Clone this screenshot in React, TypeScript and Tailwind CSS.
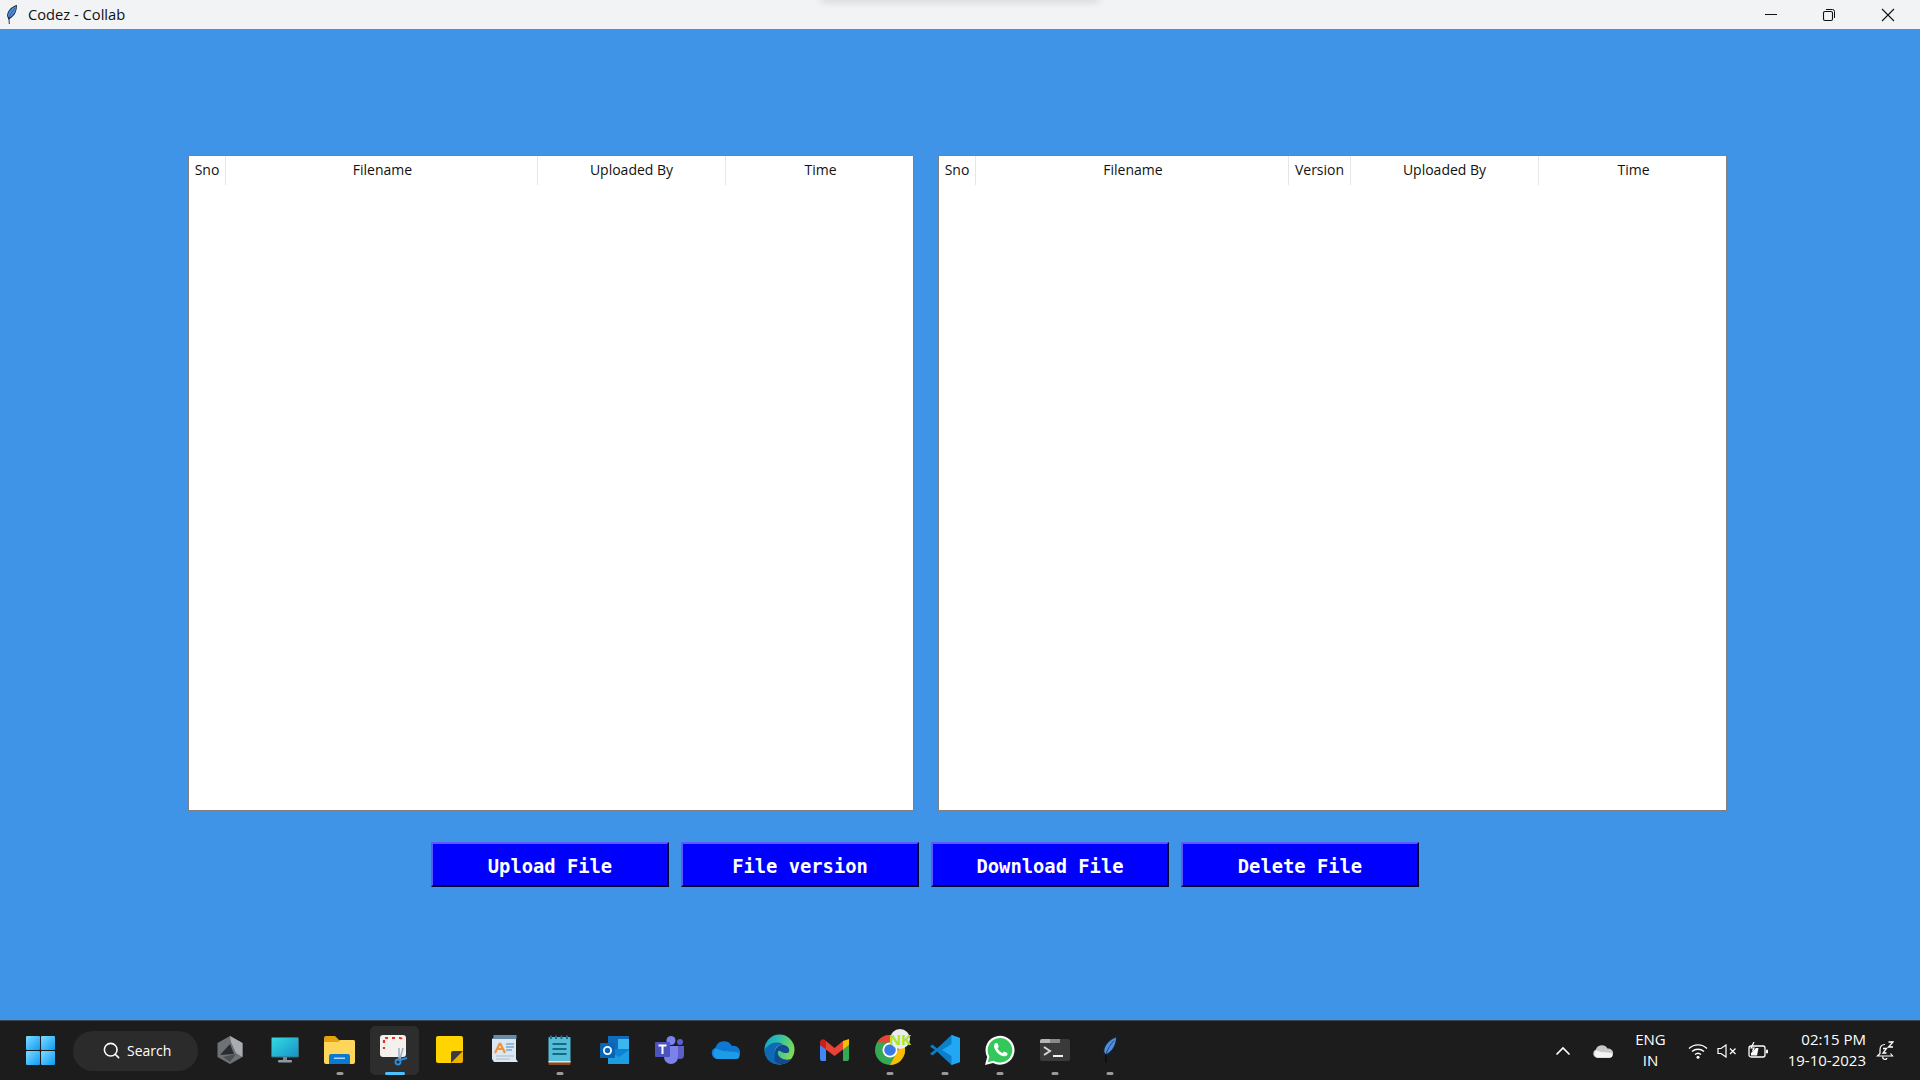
import { Search } from "lucide-react";
import type { ReactNode } from "react";

type Col = { label: string; width: string };

const leftCols: Col[] = [
  { label: "Sno", width: "w-[37px]" },
  { label: "Filename", width: "w-[312px] pl-[2px]" },
  { label: "Uploaded By", width: "w-[188px]" },
  { label: "Time", width: "flex-1 pl-[2px]" },
];

const rightCols: Col[] = [
  { label: "Sno", width: "w-[37px]" },
  { label: "Filename", width: "w-[313px] pl-[2px]" },
  { label: "Version", width: "w-[62px]" },
  { label: "Uploaded By", width: "w-[188px]" },
  { label: "Time", width: "flex-1 pl-[2px]" },
];

function FeatherIcon({ className }: { className: string }) {
  return (
    <svg viewBox="0 0 14 27" className={className}>
      <path d="M14 0C7 1.500 0 8 0 15.500L2 20.500C9.500 18 14.500 9 14 0Z" fill="#16233a" />
      <path d="M13 1.500C7.500 3.500 1.200 9 1.200 15.500L2.600 18.500C8.500 16 13 9 13 1.500Z" fill="#4f8fdc" />
      <path d="M11 4.500C8 8 5 12 2.800 18.500" stroke="#1a2c48" strokeWidth="0.700" fill="none" />
      <path d="M2.600 18L3.200 27" stroke="#0c0c0c" strokeWidth="1.200" />
    </svg>
  );
}

function TitleBar() {
  return (
    <div className="relative flex h-[29px] shrink-0 items-center bg-[#f1f3f5] font-['Open_Sans',sans-serif] text-[14.700px] text-[#111]">
      <div className="absolute left-[820px] top-[-6px] h-[6px] w-[280px] rounded-full shadow-[0_1px_8px_rgba(0,0,0,0.16)]" />
      <div className="ml-[7px] mr-[11px] flex">
        <FeatherIcon className="h-[19px] w-[10px]" />
      </div>
      <span>Codez - Collab</span>
      <div className="ml-auto flex items-center">
        <svg width="14" height="14" viewBox="0 0 14 14" className="mr-[44px]">
          <path d="M1 6.500H13" stroke="#111" strokeWidth="1" />
        </svg>
        <svg width="14" height="14" viewBox="0 0 14 14" className="mr-[45px]">
          <rect x="1.500" y="3.500" width="9" height="9" rx="1.500" fill="none" stroke="#111" strokeWidth="1.100" />
          <path d="M4 1.500H10.500A2 2 0 0 1 12.500 3.500V10" fill="none" stroke="#111" strokeWidth="1" />
        </svg>
        <svg width="14" height="14" viewBox="0 0 14 14" className="mr-[25px]">
          <path d="M1 1L13 13M13 1L1 13" stroke="#111" strokeWidth="1.100" />
        </svg>
      </div>
    </div>
  );
}

function FileTable({ cols, className }: { cols: Col[]; className: string }) {
  return (
    <div className={`h-[656px] shrink-0 border border-[#808080] bg-white ${className}`}>
      <div className="flex h-[29px] font-['Open_Sans',sans-serif] text-[14px] text-[#111]">
        {cols.map((c, i) => (
          <div
            key={c.label}
            className={`flex items-center justify-center pb-[2px] ${c.width} ${
              i < cols.length - 1 ? "border-r border-[#e6e6e6]" : ""
            }`}
          >
            {c.label}
          </div>
        ))}
      </div>
    </div>
  );
}

function ActionButton({ label }: { label: string }) {
  return (
    <button className="h-[45px] w-[238px] border-2 border-t-[#5a5aff] border-l-[#5a5aff] border-r-[#000033] border-b-[#000033] bg-[#0000ff] pt-[5px] font-['DejaVu_Sans_Mono',monospace] text-[18.800px] font-bold text-white">
      {label}
    </button>
  );
}

function Slot({ children, dot, active }: { children: ReactNode; dot?: boolean; active?: boolean }) {
  return (
    <div className="relative flex h-[60px] w-[55px] shrink-0 items-center justify-center">
      {active && (
        <div className="absolute inset-x-[3px] top-[5px] h-[49px] rounded-[5px] border border-[#2c2c2c] bg-[#2d2d2d]" />
      )}
      <div className="relative mb-[2px] flex">{children}</div>
      {dot && (
        <div
          className={`absolute bottom-[6px] left-1/2 h-[3px] -translate-x-1/2 rounded-full ${
            active ? "w-[20px] bg-[#4cc2ff]" : "w-[7px] bg-[#9a9a9a]"
          }`}
        />
      )}
    </div>
  );
}

function WindowsLogo() {
  return (
    <svg width="29" height="29" viewBox="0 0 29 29">
      <defs>
        <linearGradient id="win" x1="0" y1="0" x2="1" y2="1">
          <stop offset="0" stopColor="#7fdcff" />
          <stop offset="1" stopColor="#0c9bf5" />
        </linearGradient>
      </defs>
      <rect x="0" y="0" width="14" height="14" rx="1" fill="url(#win)" />
      <rect x="15" y="0" width="14" height="14" rx="1" fill="url(#win)" />
      <rect x="0" y="15" width="14" height="14" rx="1" fill="url(#win)" />
      <rect x="15" y="15" width="14" height="14" rx="1" fill="url(#win)" />
    </svg>
  );
}

function HexIcon() {
  return (
    <svg width="28" height="30" viewBox="0 0 28 30">
      <path d="M14 1L26.500 8V22L14 29L1.500 22V8Z" fill="#6d7278" />
      <path d="M14 1L26.500 8V22L20 18L15 7Z" fill="#a9adb2" />
      <path d="M4 20L14 9L18 19Z" fill="#2a2c2f" />
      <path d="M7 22L20 19L14 27Z" fill="#4c4f54" />
    </svg>
  );
}

function MonitorIcon() {
  return (
    <svg width="28" height="26" viewBox="0 0 28 26">
      <defs>
        <linearGradient id="mon" x1="0" y1="0" x2="1" y2="1">
          <stop offset="0" stopColor="#35dbe0" />
          <stop offset="1" stopColor="#1591c9" />
        </linearGradient>
      </defs>
      <rect x="0.500" y="0.500" width="27" height="19.500" rx="1" fill="url(#mon)" stroke="#3d6b7a" />
      <rect x="12" y="20" width="4" height="3" fill="#79858c" />
      <rect x="7" y="23" width="14" height="2.500" rx="1" fill="#8f9aa0" />
    </svg>
  );
}

function FolderIcon() {
  return (
    <svg width="31" height="28" viewBox="0 0 31 28">
      <path d="M0 2A2 2 0 0 1 2 0H11L15 4H29A2 2 0 0 1 31 6V10H0Z" fill="#e3a30f" />
      <path d="M0 6H14L17 4H29A2 2 0 0 1 31 6V26A2 2 0 0 1 29 28H2A2 2 0 0 1 0 26Z" fill="#ffd65c" />
      <path d="M5 20A2 2 0 0 1 7 18H24A2 2 0 0 1 26 20V28H5Z" fill="#0b78d4" />
      <rect x="10" y="21.500" width="11" height="1.500" fill="#a5d8ff" />
    </svg>
  );
}

function SnipIcon() {
  return (
    <svg width="32" height="32" viewBox="0 0 32 32">
      <rect x="1" y="1" width="26" height="22" rx="3" fill="#f4f0ee" />
      <path d="M5 9V6A2 2 0 0 1 7 4H9M13 4H16M20 4H21A2 2 0 0 1 23 6V7M5 13V15" stroke="#d9352c" strokeWidth="2.200" fill="none" strokeDasharray="3 2" />
      <path d="M20 14L20 25" stroke="#9db1c2" strokeWidth="1.600" />
      <path d="M24 14L21 25" stroke="#9db1c2" strokeWidth="1.600" />
      <circle cx="19" cy="28" r="2.500" fill="none" stroke="#2a8fe0" strokeWidth="1.800" />
      <path d="M21 26L28 24" stroke="#2a8fe0" strokeWidth="2" />
    </svg>
  );
}

function StickyIcon() {
  return (
    <svg width="27" height="27" viewBox="0 0 27 27">
      <path d="M2 0H25A2 2 0 0 1 27 2V15L15 27H2A2 2 0 0 1 0 25V2A2 2 0 0 1 2 0Z" fill="#ffd400" />
      <path d="M15 27V17A2 2 0 0 1 17 15H27Z" fill="#3b3b3b" />
      <path d="M15 27L27 15V25A2 2 0 0 1 25 27Z" fill="#eeb100" />
    </svg>
  );
}

function WordpadIcon() {
  return (
    <svg width="26" height="29" viewBox="0 0 26 29">
      <path d="M2 3H24V24L26 27H2L0 24V4Z" fill="#dbe8f4" />
      <rect x="1.500" y="0" width="23" height="4" fill="#6a8ba8" />
      <path d="M8 8L3 18M8 8L13 18M5 14H11" stroke="#f0933a" strokeWidth="2.200" fill="none" />
      <path d="M14 9H22M14 12H22M14 15H20" stroke="#7fa8d0" strokeWidth="1.400" />
      <path d="M4 21H22M4 24H18" stroke="#aeb9c4" strokeWidth="1" />
    </svg>
  );
}

function NotepadIcon() {
  return (
    <svg width="23" height="30" viewBox="0 0 23 30">
      <rect x="0.500" y="2" width="22" height="25" rx="1" fill="#55bdd9" />
      <path d="M0.500 26H22.500V29A1 1 0 0 1 21.500 30H1.500A1 1 0 0 1 0.500 29Z" fill="#8a4b24" />
      <path d="M0.500 26H22.500V27.500H0.500Z" fill="#e9e3d6" />
      <path d="M3 0.500V4M8 0.500V4M13.500 0.500V4M19 0.500V4" stroke="#1d6f8c" strokeWidth="2" />
      <path d="M4.500 9H18.500M4.500 14H18.500M4.500 19H18.500" stroke="#176a87" strokeWidth="2" />
    </svg>
  );
}

function OutlookIcon() {
  return (
    <svg width="30" height="28" viewBox="0 0 30 28">
      <rect x="8" y="0" width="21" height="14" fill="#0f6cbd" />
      <rect x="18" y="3" width="11" height="10" fill="#3bb6ee" />
      <rect x="8" y="13" width="21" height="15" fill="#0c82d6" />
      <path d="M8 14L19 21L29 14V28H8Z" fill="#1b9de2" />
      <rect x="0" y="7" width="15" height="15" rx="1" fill="#0a64b4" />
      <circle cx="7.500" cy="14.500" r="3.600" fill="none" stroke="#fff" strokeWidth="1.800" />
    </svg>
  );
}

function TeamsIcon() {
  return (
    <svg width="30" height="28" viewBox="0 0 30 28">
      <circle cx="25" cy="6" r="3" fill="#5b5fc7" />
      <circle cx="16" cy="4.500" r="4.500" fill="#7b83eb" />
      <path d="M21 10H29V19A4 4 0 0 1 21 19Z" fill="#5b5fc7" />
      <path d="M9 10H23V21A7 7 0 0 1 9 21Z" fill="#7b83eb" />
      <rect x="0" y="6" width="15" height="15" rx="1" fill="#4b53bc" />
      <path d="M3.500 9.500H11.500M7.500 9.500V18" stroke="#fff" strokeWidth="2" />
    </svg>
  );
}

function OneDriveIcon({ mono }: { mono?: boolean }) {
  return (
    <svg width={mono ? 21 : 30} height={mono ? 14 : 19} viewBox="0 0 30 19">
      <path d="M7 19A6 6 0 0 1 5.500 7.500A9 9 0 0 1 22 6A6.500 6.500 0 0 1 25 19Z" fill={mono ? "#c8c8c8" : "#0f78d4"} />
      <path d="M7 19A6 6 0 0 1 6 8.500L13 11L26 12A3.500 3.500 0 0 1 26 19Z" fill={mono ? "#f4f4f4" : "#1e9be8"} />
    </svg>
  );
}

function EdgeIcon() {
  return (
    <svg width="31" height="31" viewBox="0 0 31 31">
      <defs>
        <linearGradient id="edge" x1="0" y1="0" x2="1" y2="0.400">
          <stop offset="0" stopColor="#0c9fd8" />
          <stop offset="0.500" stopColor="#35c1a4" />
          <stop offset="1" stopColor="#7ed957" />
        </linearGradient>
      </defs>
      <circle cx="15.500" cy="15.500" r="15" fill="url(#edge)" />
      <path d="M0.500 16C0.500 25 7 30.500 15 30.500C21 30.500 25 28 27 25C20 28 12 25 11 19C10 14 14 10 19 10.500C15 7.500 8 8 4 12C2 13.500 1 15 0.500 16Z" fill="#0d6ab4" />
      <path d="M11 19C11 13 16 10 20 11C24 12 26 15 25 18C24 20 19 19 17 17.500C15.500 16 13 17 14 20C15 24 21 27 27 25C23 30 17 31 13 29C9 27 11 23 11 19Z" fill="#124a8c" />
    </svg>
  );
}

function GmailIcon() {
  return (
    <svg width="29" height="22" viewBox="0 0 29 22">
      <path d="M0 6V20A2 2 0 0 0 2 22H6V9Z" fill="#4285f4" />
      <path d="M29 6V20A2 2 0 0 1 27 22H23V9Z" fill="#34a853" />
      <path d="M23 2L29 0V6L23 10.500Z" fill="#fbbc04" />
      <path d="M6 2L14.500 9L23 2V10.500L14.500 17L6 10.500Z" fill="#ea4335" />
      <path d="M0 3A3 3 0 0 1 5 1L6 2V10.500L0 6Z" fill="#c5221f" />
    </svg>
  );
}

function ChromeIcon() {
  return (
    <svg width="38" height="38" viewBox="0 0 38 38" className="overflow-visible">
      <g transform="translate(3,-3)">
        <circle cx="16" cy="22" r="15" fill="#34a853" />
        <path d="M3 14.500A15 15 0 0 1 29 14.500H16Z" fill="#ea4335" />
        <path d="M29 14.500A15 15 0 0 1 16 37L23 24Z" fill="#fbbc04" />
        <circle cx="16" cy="22" r="7.500" fill="#fff" />
        <circle cx="16" cy="22" r="5.800" fill="#3b78e7" />
      </g>
      <circle cx="29" cy="8" r="10" fill="#ececec" />
      <text x="29" y="13.500" textAnchor="middle" fontSize="15" fontWeight="700" fontFamily="Open Sans, sans-serif" fill="#a8e61d">
        NK
      </text>
    </svg>
  );
}

function VsCodeIcon() {
  return (
    <svg width="30" height="30" viewBox="0 0 30 30">
      <path d="M21.500 0L30 3V27L21.500 30L7 16.500L2.500 20.500L0 18.500L5 15L0 11.500L2.500 9.500L7 13.500Z" fill="#0a80cc" />
      <path d="M21.500 0L30 3V27L21.500 30L21.500 21L12 15L21.500 9Z" fill="#22a7f2" />
    </svg>
  );
}

function WhatsAppIcon() {
  return (
    <svg width="30" height="30" viewBox="0 0 30 30">
      <path d="M0 30L2.200 22A14.500 14.500 0 1 1 8 27.900Z" fill="#fff" />
      <path d="M2.800 27.200L4.400 21.500A12.300 12.300 0 1 1 8.500 25.700Z" fill="#34c759" />
      <path d="M10.500 8C9 9 8.500 11 9.500 13.500C11 17 14 20 17.500 21C20 21.800 22 21 22.500 19.500L22.300 18L19 16.500L17.500 18C15.500 17.200 13.500 15.300 12.500 13.200L13.800 11.700L12.500 8.300Z" fill="#fff" />
    </svg>
  );
}

function TerminalIcon() {
  return (
    <svg width="30" height="22" viewBox="0 0 30 22">
      <rect x="0" y="0" width="30" height="22" rx="2" fill="#3a3a3a" />
      <path d="M0 2A2 2 0 0 1 2 0H10V4H0Z" fill="#b5b5b5" />
      <rect x="10" y="0" width="10" height="4" fill="#8a8a8a" />
      <path d="M4 8L10 12L4 16" fill="none" stroke="#d6d6d6" strokeWidth="2" />
      <path d="M13 17H23" stroke="#f0f0f0" strokeWidth="2" />
    </svg>
  );
}

function Taskbar() {
  return (
    <div className="flex h-[60px] shrink-0 items-center border-t border-[#3b4652] bg-[#1c1c1c] font-['Open_Sans',sans-serif] text-white">
      <div className="ml-[13px] flex w-[55px] justify-center">
        <WindowsLogo />
      </div>
      <div className="ml-[5px] flex h-[40px] w-[125px] items-center rounded-full bg-[#2b2b2b] pb-[1px] pl-[29px] text-[14px]">
        <Search size={19} strokeWidth={2} className="mr-[6px]" />
        Search
      </div>
      <div className="ml-[4px] flex">
        <Slot><HexIcon /></Slot>
        <Slot><MonitorIcon /></Slot>
        <Slot dot><FolderIcon /></Slot>
        <Slot dot active><SnipIcon /></Slot>
        <Slot><StickyIcon /></Slot>
        <Slot><WordpadIcon /></Slot>
        <Slot dot><NotepadIcon /></Slot>
        <Slot><OutlookIcon /></Slot>
        <Slot><TeamsIcon /></Slot>
        <Slot><OneDriveIcon /></Slot>
        <Slot><EdgeIcon /></Slot>
        <Slot><GmailIcon /></Slot>
        <Slot dot><ChromeIcon /></Slot>
        <Slot dot><VsCodeIcon /></Slot>
        <Slot dot><WhatsAppIcon /></Slot>
        <Slot dot><TerminalIcon /></Slot>
        <Slot dot><FeatherIcon className="h-[27px] w-[14px]" /></Slot>
      </div>
      <div className="ml-auto flex items-center">
        <svg width="16" height="10" viewBox="0 0 16 10" className="mr-[21px]">
          <path d="M1.500 8.500L8 2L14.500 8.500" fill="none" stroke="#fff" strokeWidth="1.600" />
        </svg>
        <div className="mr-[22px] flex">
          <OneDriveIcon mono />
        </div>
        <div className="mb-[2px] mr-[22px] flex flex-col items-center text-[15px] leading-[21px]">
          <span>ENG</span>
          <span>IN</span>
        </div>
        <svg width="20" height="16" viewBox="0 0 20 16" className="mr-[9px]">
          <path d="M1 5.500A13 13 0 0 1 19 5.500M4 8.500A9 9 0 0 1 16 8.500M7 11.500A4.500 4.500 0 0 1 13 11.500" fill="none" stroke="#fff" strokeWidth="1.400" />
          <circle cx="10" cy="14.200" r="1.500" fill="#fff" />
        </svg>
        <svg width="20" height="14" viewBox="0 0 20 14" className="mr-[11px]">
          <path d="M1 4.500H4L9 1V13L4 9.500H1Z" fill="none" stroke="#fff" strokeWidth="1.200" />
          <path d="M13 4.500L18.500 10M18.500 4.500L13 10" stroke="#fff" strokeWidth="1.200" />
        </svg>
        <svg width="21" height="17" viewBox="0 0 21 17" className="mr-[19px]">
          <rect x="1" y="4" width="16" height="11" rx="2" fill="none" stroke="#fff" strokeWidth="1.300" />
          <rect x="18" y="7.500" width="2" height="4" rx="1" fill="#fff" />
          <path d="M3 13.500H9L10.500 6H8L3 11Z" fill="#fff" />
          <path d="M6 0L3 6H6L4.500 9" fill="none" stroke="#fff" strokeWidth="1.200" />
        </svg>
        <div className="mb-[2px] mr-[10px] flex flex-col items-end text-[15px] leading-[21px]">
          <span>02:15 PM</span>
          <span>19-10-2023</span>
        </div>
        <svg width="18" height="20" viewBox="0 0 18 20" className="mr-[26px]">
          <path d="M9 3.500C5.500 3.500 4 6 4 9V12.500L1.500 15H16.500L14.500 12.500" fill="none" stroke="#fff" strokeWidth="1.200" />
          <path d="M7 15.500A2 2 0 0 0 11 17" fill="none" stroke="#fff" strokeWidth="1.200" />
          <path d="M7 7.500H10.500L7 12H10.500M12.500 1H17L12.500 6H17" fill="none" stroke="#fff" strokeWidth="1.300" />
        </svg>
      </div>
    </div>
  );
}

export default function App() {
  return (
    <div className="flex h-screen w-full flex-col overflow-hidden bg-[#4094e8]">
      <TitleBar />
      <main className="flex-1 pt-[126px]">
        <div className="ml-[188px] flex gap-[24px]">
          <FileTable cols={leftCols} className="w-[726px]" />
          <FileTable cols={rightCols} className="w-[789px]" />
        </div>
        <div className="ml-[431px] mt-[31px] flex gap-[12px]">
          <ActionButton label="Upload File" />
          <ActionButton label="File version" />
          <ActionButton label="Download File" />
          <ActionButton label="Delete File" />
        </div>
      </main>
      <Taskbar />
    </div>
  );
}
